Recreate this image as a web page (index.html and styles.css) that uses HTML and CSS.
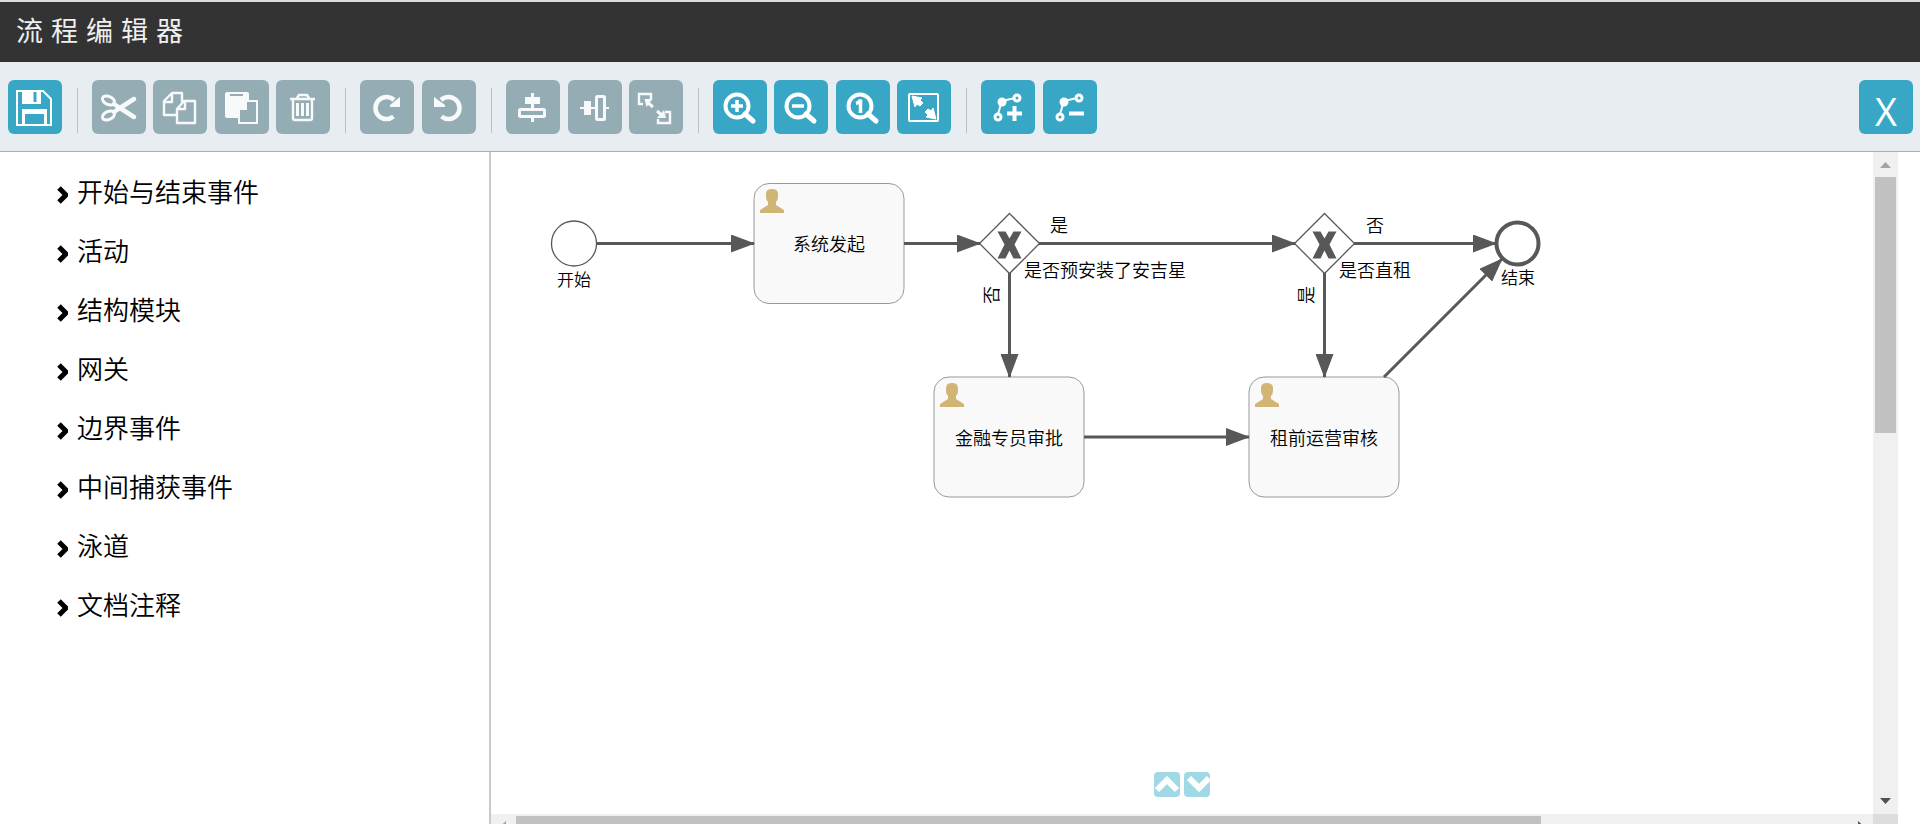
FILE: index.html
```html
<!DOCTYPE html>
<html lang="zh-CN">
<head>
<meta charset="utf-8">
<title>流程编辑器</title>
<link rel="stylesheet" href="styles.css">
</head>
<body>
<header class="header"><h1 class="title"><span>流</span><span>程</span><span>编</span><span>辑</span><span>器</span></h1></header>

<div class="toolbar" role="toolbar" aria-label="编辑工具">
  <button class="tool" aria-label="保存"><svg viewBox="0 0 54 54"><path d="M9 11h26l8 8v26H9z" fill="none" stroke="#fff" stroke-width="2"/><path d="M14 11h19v13H14zM14 29h25v15h-3V34H17v10h-3z" fill="#fff"/><path d="M25.500 12h3v10h-3z" fill="#38a7c6"/></svg></button>
  <span class="sep"></span>
  <div class="group group-4">
    <button class="tool muted" aria-label="剪切"><svg viewBox="0 0 54 54" fill="none" stroke="#f8f9fa"><ellipse cx="16.500" cy="20.500" rx="6.500" ry="4" transform="rotate(25 16.500 20.500)" stroke-width="3"/><ellipse cx="16.500" cy="35.500" rx="6.500" ry="4" transform="rotate(-25 16.500 35.500)" stroke-width="3"/><path d="M22 24l6 4 14-9M22 32l6-4 14 9" stroke-width="4.500" stroke-linecap="round"/></svg></button>
    <button class="tool muted" aria-label="复制"><svg viewBox="0 0 54 54" fill="none" stroke="#f8f9fa" stroke-width="2.400" stroke-linejoin="round"><path d="M23.500 35H11V21l8-8h10v9M11 22h8v-8M24 29l7-8h11v22H24zM24 29h8v-7"/></svg></button>
    <button class="tool muted" aria-label="粘贴"><svg viewBox="0 0 54 54"><rect x="10" y="12" width="24" height="26" rx="2" fill="#f8f9fa"/><path d="M15 15h13" stroke="#94adb5" stroke-width="2"/><path d="M24 29l7-8h11v22H24z" fill="#94adb5" stroke="#f8f9fa" stroke-width="2"/><path d="M24 29l7-8v8z" fill="#f8f9fa" stroke="#f8f9fa" stroke-width="2"/></svg></button>
    <button class="tool muted" aria-label="删除"><svg viewBox="0 0 54 54" fill="none" stroke="#f8f9fa" stroke-width="2.400"><path d="M14 19h25M21 18l2-3h8l2 3M17 20v18q0 2 2 2h15q2 0 2-2V20"/><path d="M21.500 23v13M26.500 23v13M31.500 23v13" stroke-width="3"/></svg></button>
  </div>
  <span class="sep"></span>
  <div class="group group-2">
    <button class="tool muted" aria-label="重做"><svg viewBox="0 0 54 54"><path d="M33.500 36.500A11 11 0 1 1 34 20" fill="none" stroke="#f8f9fa" stroke-width="4.500"/><path d="M40 17v10H30v-2z" fill="#f8f9fa"/></svg></button>
    <button class="tool muted" aria-label="撤销"><svg viewBox="0 0 54 54"><path d="M19.500 36.500A11 11 0 1 0 19 20" fill="none" stroke="#f8f9fa" stroke-width="4.500"/><path d="M12 17v10h11v-2z" fill="#f8f9fa"/></svg></button>
  </div>
  <span class="sep"></span>
  <div class="group group-3">
    <button class="tool muted" aria-label="垂直对齐"><svg viewBox="0 0 54 54"><path d="M19 17h15v7H19zM25 13h3v16h-3zM25 36h3v6h-3z" fill="#f8f9fa"/><rect x="13.500" y="29.500" width="25" height="7" rx="1" fill="none" stroke="#f8f9fa" stroke-width="3"/></svg></button>
    <button class="tool muted" aria-label="水平对齐"><svg viewBox="0 0 54 54"><path d="M16 21h7v14h-7zM12 27h15v2H12zM38 27h3v2h-3z" fill="#f8f9fa"/><rect x="28.500" y="16.500" width="8" height="23" rx="1" fill="none" stroke="#f8f9fa" stroke-width="3"/></svg></button>
    <button class="tool muted" aria-label="相同大小"><svg viewBox="0 0 54 54" fill="none" stroke="#f8f9fa" stroke-width="2.400"><path d="M14 24h-4V14h12v5M36 32h5v11H29v-4"/><path d="M18 22l6 5M28 31l6 5" stroke-width="3"/><path d="M15.500 19h8l-6 8zM37 38h-9l7-8z" fill="#f8f9fa" stroke="none"/></svg></button>
  </div>
  <span class="sep"></span>
  <div class="group group-4">
    <button class="tool" aria-label="放大"><svg viewBox="0 0 54 54" fill="none" stroke="#fff"><circle cx="24" cy="26" r="11.500" stroke-width="4"/><path d="M32 34l8 7" stroke-width="5" stroke-linecap="round"/><path d="M18 26h12M24 20v12" stroke-width="3.500"/></svg></button>
    <button class="tool" aria-label="缩小"><svg viewBox="0 0 54 54" fill="none" stroke="#fff"><circle cx="24" cy="26" r="11.500" stroke-width="4"/><path d="M32 34l8 7" stroke-width="5" stroke-linecap="round"/><path d="M18 26h12" stroke-width="3.500"/></svg></button>
    <button class="tool" aria-label="实际大小"><svg viewBox="0 0 54 54" fill="none" stroke="#fff"><circle cx="24" cy="26" r="11.500" stroke-width="4"/><path d="M32 34l8 7" stroke-width="5" stroke-linecap="round"/><path d="M20 23.500q4-1 4.500-4V33" stroke-width="3.500"/></svg></button>
    <button class="tool" aria-label="适应窗口"><svg viewBox="0 0 54 54"><rect x="12" y="14" width="29" height="27" rx="1" fill="none" stroke="#fff" stroke-width="2"/><path d="M15 16l10 2-2 2 3 3-3 3-3-2-2 3zM39 39l-10-2 2-2-3-3 3-3 3 2 2-3z" fill="#fff" stroke="#fff"/></svg></button>
  </div>
  <span class="sep"></span>
  <div class="group group-2">
    <button class="tool" aria-label="添加折点"><svg viewBox="0 0 54 54" fill="none" stroke="#fff"><path d="M17 34l4-13 13-3" stroke-width="2"/><circle cx="21" cy="22" r="4.500" fill="#fff" stroke="none"/><circle cx="36" cy="18" r="3" stroke-width="3"/><circle cx="17" cy="37" r="3" stroke-width="3"/><path d="M26 33.500h15M33.500 26v15" stroke-width="4"/></svg></button>
    <button class="tool" aria-label="删除折点"><svg viewBox="0 0 54 54" fill="none" stroke="#fff"><path d="M17 34l4-13 13-3" stroke-width="2"/><circle cx="21" cy="22" r="4.500" fill="#fff" stroke="none"/><circle cx="36" cy="18" r="3" stroke-width="3"/><circle cx="17" cy="37" r="3" stroke-width="3"/><path d="M26 33.500h15" stroke-width="4"/></svg></button>
  </div>
  <button class="tool close" aria-label="关闭">X</button>
</div>

<main class="workspace">
  <nav class="palette" aria-label="元素">
    <button class="category"><svg class="chevron" viewBox="0 0 12 18"><path d="M3 2l7 7-7 7" /></svg>开始与结束事件</button>
    <button class="category"><svg class="chevron" viewBox="0 0 12 18"><path d="M3 2l7 7-7 7" /></svg>活动</button>
    <button class="category"><svg class="chevron" viewBox="0 0 12 18"><path d="M3 2l7 7-7 7" /></svg>结构模块</button>
    <button class="category"><svg class="chevron" viewBox="0 0 12 18"><path d="M3 2l7 7-7 7" /></svg>网关</button>
    <button class="category"><svg class="chevron" viewBox="0 0 12 18"><path d="M3 2l7 7-7 7" /></svg>边界事件</button>
    <button class="category"><svg class="chevron" viewBox="0 0 12 18"><path d="M3 2l7 7-7 7" /></svg>中间捕获事件</button>
    <button class="category"><svg class="chevron" viewBox="0 0 12 18"><path d="M3 2l7 7-7 7" /></svg>泳道</button>
    <button class="category"><svg class="chevron" viewBox="0 0 12 18"><path d="M3 2l7 7-7 7" /></svg>文档注释</button>
  </nav>

  <section class="editor">
    <div class="canvas">
      <svg class="diagram" width="1100" height="400" viewBox="491 152 1100 400">
        <defs>
          <marker id="arrow" markerUnits="userSpaceOnUse" markerWidth="24" markerHeight="18" refX="23" refY="9" orient="auto"><path d="M0 0l24 9-24 9z" fill="#585858"/></marker>
          <g id="user"><path d="M0 24v-3l8-5v-3q-2-2-2-5V5q0-5 6-5t6 5v3q0 3-2 5v3l8 5v3z" fill="#d1b575"/></g>
          <g id="gateway"><path d="M0-30L30 0 0 30-30 0z" fill="#fff" stroke="#585858" stroke-width="1.300"/><path d="M-12-12h8l4 7 4-7h8L5 1l7 14H4L0 7l-4 8h-8l7-14z" fill="#585858"/></g>
        </defs>
        <g class="tasks">
          <rect x="754" y="183.500" width="150" height="120" rx="15"/>
          <rect x="934" y="377" width="150" height="120" rx="15"/>
          <rect x="1249" y="377" width="150" height="120" rx="15"/>
        </g>
        <use href="#user" x="760" y="189"/><use href="#user" x="940" y="383"/><use href="#user" x="1255" y="383"/>
        <circle cx="574" cy="243.500" r="22.500" fill="#fff" stroke="#585858" stroke-width="1.300"/>
        <circle cx="1517.500" cy="243.500" r="21" fill="#fff" stroke="#585858" stroke-width="4"/>
        <use href="#gateway" x="1009.500" y="243.500"/><use href="#gateway" x="1324.500" y="243.500"/>
        <g class="flows">
          <path d="M597 243.500H754"/><path d="M904 243.500H980"/><path d="M1039 243.500H1295"/><path d="M1354 243.500H1496"/>
          <path d="M1009.500 273V377"/><path d="M1324.500 273V377"/><path d="M1084 437H1249"/><path d="M1384 377L1502 259"/>
        </g>
        <g class="labels">
          <text x="829" y="251">系统发起</text>
          <text x="1009" y="445">金融专员审批</text>
          <text x="1324" y="445">租前运营审核</text>
          <text x="1059" y="232">是</text>
          <text x="1375" y="232">否</text>
          <text x="1105" y="277">是否预安装了安吉星</text>
          <text x="1375" y="277">是否直租</text>
          <text transform="translate(998 295) rotate(-90)">否</text>
          <text transform="translate(1313 295) rotate(-90)">是</text>
          <text class="event" x="574" y="286">开始</text>
          <text class="event" x="1518" y="284">结束</text>
        </g>
      </svg>
      <div class="pager">
        <button class="page-button" aria-label="向上"><svg viewBox="0 0 26 25"><path d="M3 18l10-10 10 10"/></svg></button>
        <button class="page-button" aria-label="向下"><svg viewBox="0 0 26 25"><path d="M5 6l10 10 10-10"/></svg></button>
      </div>
    </div>
    <div class="vbar">
      <svg class="bar-arrow" viewBox="0 0 25 25"><path d="M7 16h11l-5.500-6z" fill="#a3a3a3"/></svg>
      <div class="vthumb"></div>
      <svg class="bar-arrow last" viewBox="0 0 25 25"><path d="M7 9h11l-5.500 6z" fill="#505050"/></svg>
    </div>
    <div class="hbar">
      <svg class="bar-arrow" viewBox="0 0 25 25"><path d="M15 7v11l-6-5.500z" fill="#a3a3a3"/></svg>
      <div class="hthumb"></div>
      <svg class="bar-arrow last" viewBox="0 0 25 25"><path d="M10 7v11l6-5.500z" fill="#505050"/></svg>
    </div>
    <div class="corner"></div>
  </section>
</main>
</body>
</html>
```

FILE: styles.css
```css
* { box-sizing: border-box; }
body {
  margin: 0;
  height: 100vh;
  display: flex;
  flex-direction: column;
  overflow: hidden;
  background: #fff;
  color: #000;
  font-family: "Noto Sans CJK SC", sans-serif;
}
button { padding: 0; border: 0; background: none; color: inherit; font: inherit; cursor: pointer; }
svg { display: block; }

.header {
  flex: none;
  display: flex;
  align-items: center;
  height: 62px;
  padding: 0 16px 4px;
  border-top: 2px solid #dcdcdc;
  background: #333;
}
.title { display: flex; gap: 8px; margin: 0; color: #f0f0f0; font-size: 27px; line-height: 40px; font-weight: 400; }

.toolbar {
  flex: none;
  display: flex;
  align-items: flex-start;
  height: 90px;
  padding: 18px 7px 0 8px;
  border-bottom: 1px solid #a4acb9;
  background: #e8edf1;
}
.group { display: flex; justify-content: space-between; }
.group-2 { width: 116px; }
.group-3 { width: 177px; }
.group-4 { width: 238px; }
.tool { flex: none; width: 54px; height: 54px; border-radius: 6px; background: #38a7c6; }
.tool.muted { background: #94adb5; }
.tool svg { width: 54px; height: 54px; }
.sep { flex: none; width: 1px; height: 45px; margin: 8px 14px 0 15px; background: #b8bfc9; }
.close { margin-left: auto; padding-top: 8px; color: #fff; font-family: "Open Sans", sans-serif; font-size: 38px; line-height: 46px; }

.workspace { flex: 1; min-height: 0; display: flex; }
.palette {
  flex: none;
  display: flex;
  flex-direction: column;
  width: 491px;
  padding: 9px 0 0 56px;
  border-right: 2px solid #c5c9cf;
}
.category { display: flex; align-items: center; gap: 9px; height: 59px; font-size: 26px; font-weight: 350; text-align: left; }
.chevron { width: 12px; height: 18px; margin-top: 8px; }
.chevron path { fill: none; stroke: #000; stroke-width: 5; }

.editor { flex: 1; min-width: 0; display: grid; grid-template-columns: 1fr 25px; grid-template-rows: 1fr 10px; margin-right: 22px; }
.canvas { position: relative; min-height: 0; overflow: hidden; }
.tasks { fill: #f9f9f9; stroke: #999; stroke-width: 1px; }
.flows { fill: none; stroke: #585858; stroke-width: 3px; }
.flows path { marker-end: url(#arrow); }
.labels { font-size: 18px; font-weight: 350; text-anchor: middle; }
.labels .event { font-size: 17px; }
.pager { position: absolute; left: 48%; bottom: 17px; display: flex; gap: 4px; }
.page-button { width: 26px; height: 25px; border-radius: 4px; background: #a0d8e5; }
.page-button path { fill: none; stroke: #fff; stroke-width: 6; }

.vbar { display: flex; flex-direction: column; min-height: 0; background: #f0f0f0; }
.vthumb { width: 21px; height: 38.7%; margin: 0 2px; background: #c1c1c1; }
.hbar { display: flex; min-width: 0; overflow: hidden; background: #f0f0f0; }
.hthumb { width: 74.2%; margin-top: 2px; background: #c1c1c1; }
.bar-arrow { flex: none; width: 25px; height: 25px; }
.vbar .last { margin-top: auto; }
.hbar .last { margin-left: auto; }
.corner { background: #dcdcdc; }
```
